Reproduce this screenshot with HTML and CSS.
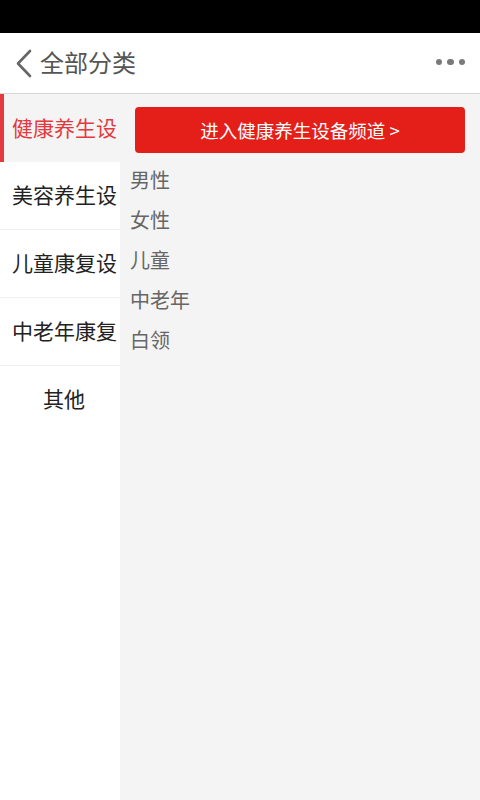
FILE: index.html
```html
<!DOCTYPE html>
<html lang="zh">
<head>
<meta charset="utf-8">
<link rel="stylesheet" href="styles.css">
</head>
<body>
<div class="status"></div>
<header class="bar">
  <svg class="back" width="20" height="30" viewBox="0 0 20 30"><polyline points="16,3 4,15.5 16,28" fill="none" stroke="#666" stroke-width="2.6" stroke-linecap="round" stroke-linejoin="round"/></svg>
  <span class="title">全部分类</span>
  <span class="dots"><i></i><i></i><i></i></span>
</header>
<main class="body">
  <nav class="side">
    <div class="cat active">健康养生设</div>
    <div class="cat">美容养生设</div>
    <div class="cat">儿童康复设</div>
    <div class="cat">中老年康复</div>
    <div class="cat last">其他</div>
  </nav>
  <section class="content">
    <div class="enter">进入健康养生设备频道 &gt;</div>
    <ul class="subs">
      <li>男性</li>
      <li>女性</li>
      <li>儿童</li>
      <li>中老年</li>
      <li>白领</li>
    </ul>
  </section>
</main>
</body>
</html>
```
FILE: styles.css
```css
html, body { margin: 0; padding: 0; }
body {
  width: 480px; height: 800px; overflow: hidden;
  font-family: "Noto Sans CJK SC", "Noto Sans", sans-serif;
  background: #f4f4f4;
  display: flex; flex-direction: column;
}
.status { height: 33px; background: #000; flex: none; }
.bar {
  height: 60px; flex: none; background: #fff;
  border-bottom: 1px solid #d6d6d6;
  display: flex; align-items: center;
  padding: 0 15px 0 14px;
}
.back { display: block; margin-right: 6px; }
.title { font-size: 24px; color: #555; line-height: 1; flex: 1; padding-bottom: 2px; }
.dots { display: flex; gap: 5px; margin-top: -2px; }
.dots i { width: 6.5px; height: 6.5px; border-radius: 50%; background: #7a7a7a; display: block; }
.body { flex: 1; display: flex; }
.side { width: 120px; background: #fff; flex: none; }
.cat {
  height: 64px; box-sizing: content-box;
  border-bottom: 1px solid #f0f0f0;
  display: flex; align-items: center; justify-content: flex-start;
  padding: 0 4px 3px 12px; overflow: hidden; white-space: nowrap;
  font-size: 21px; color: #222;
}
.cat.active {
  background: #f4f4f4; color: #e23a3e; border-bottom: none; height: 65px;
  box-shadow: inset 4px 0 0 #e23a3e;
}
.cat.last { border-bottom: none; justify-content: center; }
.content { flex: 1; padding: 13px 15px 0 10px; }
.enter {
  margin-left: 5px; height: 46px; border-radius: 4px; background: #e41f1a;
  color: #fff; font-size: 18.5px; display: flex; align-items: center; justify-content: center;
}
.subs { list-style: none; margin: 7px 0 0 0; padding: 0; }
.subs li { height: 40px; line-height: 39px; font-size: 20px; color: #666; }
```
